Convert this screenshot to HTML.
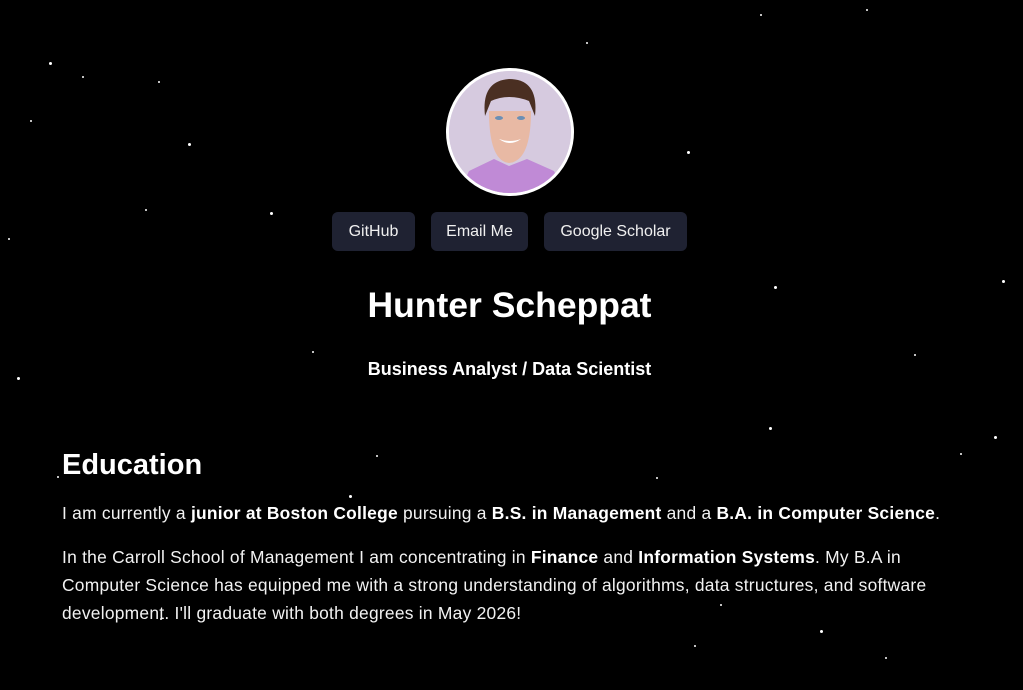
<!DOCTYPE html>
<html><head><meta charset="utf-8"><style>
html,body{margin:0;padding:0;background:#000;width:1023px;height:690px;overflow:hidden;font-family:"Liberation Sans",sans-serif;color:#fff;position:relative}
.s{position:absolute;background:#fff;border-radius:50%}
.av{position:absolute;left:446px;top:68px;width:122px;height:122px;border:3px solid #fff;border-radius:50%;overflow:hidden;background:#d9cde0}
.btn{position:absolute;top:212px;height:39px;background:#1f2232;border-radius:6px;font-size:16px;line-height:40px;text-align:center;color:#f0f0f0}
h1{position:absolute;left:0;width:1019px;top:285px;margin:0;text-align:center;font-size:35.5px;font-weight:bold}
.sub{position:absolute;left:0;width:1019px;top:359px;text-align:center;font-size:18px;font-weight:bold}
h2{position:absolute;left:62px;top:449px;margin:0;font-size:29px;font-weight:bold}
p{position:absolute;left:62px;margin:0;font-size:17.4px;line-height:28px;width:885px;color:#f2f2f2;letter-spacing:0.25px}
b{color:#fff}
</style></head><body>
<div class="s" style="left:49px;top:62px;width:3px;height:3px"></div>
<div class="s" style="left:82px;top:76px;width:2px;height:2px"></div>
<div class="s" style="left:30px;top:120px;width:2px;height:2px"></div>
<div class="s" style="left:158px;top:81px;width:2px;height:2px"></div>
<div class="s" style="left:188px;top:143px;width:3px;height:3px"></div>
<div class="s" style="left:145px;top:209px;width:2px;height:2px"></div>
<div class="s" style="left:270px;top:212px;width:3px;height:3px"></div>
<div class="s" style="left:17px;top:377px;width:3px;height:3px"></div>
<div class="s" style="left:8px;top:238px;width:2px;height:2px"></div>
<div class="s" style="left:312px;top:351px;width:2px;height:2px"></div>
<div class="s" style="left:586px;top:42px;width:2px;height:2px"></div>
<div class="s" style="left:687px;top:151px;width:3px;height:3px"></div>
<div class="s" style="left:760px;top:14px;width:2px;height:2px"></div>
<div class="s" style="left:866px;top:9px;width:2px;height:2px"></div>
<div class="s" style="left:774px;top:286px;width:3px;height:3px"></div>
<div class="s" style="left:1002px;top:280px;width:3px;height:3px"></div>
<div class="s" style="left:914px;top:354px;width:2px;height:2px"></div>
<div class="s" style="left:994px;top:436px;width:3px;height:3px"></div>
<div class="s" style="left:769px;top:427px;width:3px;height:3px"></div>
<div class="s" style="left:960px;top:453px;width:2px;height:2px"></div>
<div class="s" style="left:820px;top:630px;width:3px;height:3px"></div>
<div class="s" style="left:694px;top:645px;width:2px;height:2px"></div>
<div class="s" style="left:885px;top:657px;width:2px;height:2px"></div>
<div class="s" style="left:349px;top:495px;width:3px;height:3px"></div>
<div class="s" style="left:57px;top:476px;width:2px;height:2px"></div>
<div class="s" style="left:160px;top:618px;width:2px;height:2px"></div>
<div class="s" style="left:720px;top:604px;width:2px;height:2px"></div>
<div class="s" style="left:656px;top:477px;width:2px;height:2px"></div>
<div class="s" style="left:376px;top:455px;width:2px;height:2px"></div>
<div class="av"><svg width="122" height="122" viewBox="0 0 122 122">
<rect width="122" height="122" fill="#d6cadf"/>
<path d="M10 122 L20 100 L45 88 L60 95 L78 88 L105 100 L115 122Z" fill="#c08ad6"/>
<path d="M40 40 Q40 90 60 92 Q82 90 82 40Z" fill="#e8b9a4"/>
<path d="M36 45 Q32 10 60 8 Q90 8 86 45 L80 30 Q60 22 42 30Z" fill="#4a2f22"/>
<ellipse cx="50" cy="47" rx="4" ry="2" fill="#6b8fb5"/><ellipse cx="72" cy="47" rx="4" ry="2" fill="#6b8fb5"/>
<path d="M50 68 Q61 76 72 68 Q61 72 50 68Z" fill="#fff"/>
</svg></div>
<div class="btn" style="left:332px;width:83px">GitHub</div>
<div class="btn" style="left:431px;width:97px">Email Me</div>
<div class="btn" style="left:544px;width:143px">Google Scholar</div>
<h1>Hunter Scheppat</h1>
<div class="sub">Business Analyst / Data Scientist</div>
<h2>Education</h2>
<p style="top:499px">I am currently a <b>junior at Boston College</b> pursuing a <b>B.S. in Management</b> and a <b>B.A. in Computer Science</b>.</p>
<p style="top:543px">In the Carroll School of Management I am concentrating in <b>Finance</b> and <b>Information Systems</b>. My B.A in Computer Science has equipped me with a strong understanding of algorithms, data structures, and software development. I'll graduate with both degrees in May 2026!</p>
</body></html>
